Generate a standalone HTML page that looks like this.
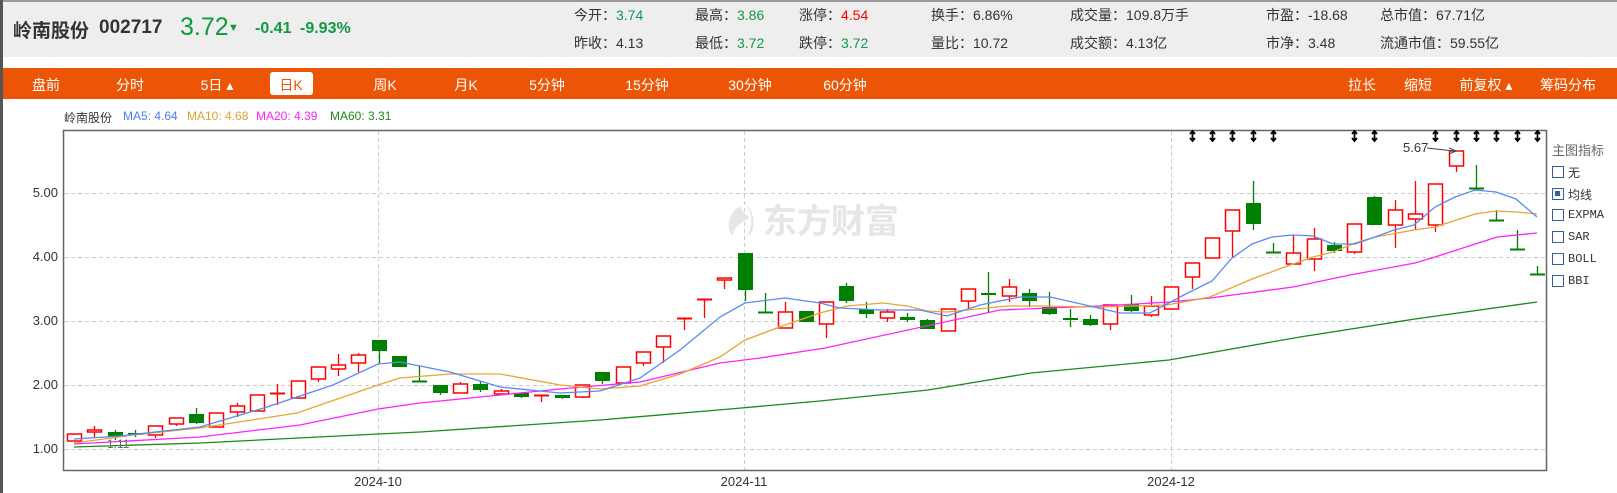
<!DOCTYPE html>
<html><head><meta charset="utf-8">
<style>
*{margin:0;padding:0;box-sizing:border-box}
body{width:1617px;height:493px;background:#fff;position:relative;overflow:hidden;font-family:"Liberation Sans","Noto Sans CJK SC",sans-serif;}
.hdr{position:absolute;left:0;top:0;width:1617px;height:57px;background:#eeeeee;border-top:2px solid #999;}
.lb{position:absolute;left:0;top:0;width:3px;height:493px;background:#555;}
.t{position:absolute;white-space:nowrap;}
.info{font-size:14px;color:#333;}
.g{color:#11994a}.r{color:#ff0000}
.bar{position:absolute;left:3px;top:68px;width:1614px;height:31px;background:#eb5505;}
.bi{position:absolute;top:75px;color:#fff;font-size:14px;transform:translateX(-50%);white-space:nowrap;}
.sel{position:absolute;left:270px;top:72px;width:43px;height:23px;background:#fff;border-radius:3px;}
.leg{font-size:12px;top:109px;}
.yl{position:absolute;font-size:13px;color:#333;width:40px;text-align:right;left:18px;}
.cb{position:absolute;left:1552px;width:12px;height:12px;border:1.5px solid #35609a;background:#fff;}
.cl{position:absolute;left:1568px;font-size:12px;color:#333;font-family:"Liberation Mono","Noto Sans CJK SC",monospace;}
</style></head><body>
<div class="hdr"></div>
<div class="t" style="left:13px;top:16px;font-size:19px;font-weight:bold;color:#333;">岭南股份</div>
<div class="t" style="left:99px;top:17px;font-size:19px;font-weight:bold;color:#333;">002717</div>
<div class="t" style="left:180px;top:13px;font-size:25px;color:#119940;">3.72</div>
<div class="t" style="left:228px;top:22px;font-size:11px;color:#119940;">▼</div>
<div class="t" style="left:255px;top:20px;font-size:16px;font-weight:bold;color:#119940;">-0.41</div>
<div class="t" style="left:300px;top:20px;font-size:16px;font-weight:bold;color:#119940;">-9.93%</div>

<div class="t info" style="left:574px;top:5px;">今开：<span class="g">3.74</span></div>
<div class="t info" style="left:574px;top:33px;">昨收：4.13</div>
<div class="t info" style="left:695px;top:5px;">最高：<span class="g">3.86</span></div>
<div class="t info" style="left:695px;top:33px;">最低：<span class="g">3.72</span></div>
<div class="t info" style="left:799px;top:5px;">涨停：<span class="r">4.54</span></div>
<div class="t info" style="left:799px;top:33px;">跌停：<span class="g">3.72</span></div>
<div class="t info" style="left:931px;top:5px;">换手：6.86%</div>
<div class="t info" style="left:931px;top:33px;">量比：10.72</div>
<div class="t info" style="left:1070px;top:5px;">成交量：109.8万手</div>
<div class="t info" style="left:1070px;top:33px;">成交额：4.13亿</div>
<div class="t info" style="left:1266px;top:5px;">市盈：-18.68</div>
<div class="t info" style="left:1266px;top:33px;">市净：3.48</div>
<div class="t info" style="left:1380px;top:5px;">总市值：67.71亿</div>
<div class="t info" style="left:1380px;top:33px;">流通市值：59.55亿</div>

<div class="bar"></div>
<div class="sel"></div>
<div class="bi" style="left:46px">盘前</div>
<div class="bi" style="left:130px">分时</div>
<div class="bi" style="left:217px">5日 ▴</div>
<div class="bi" style="left:291px;color:#eb5505">日K</div>
<div class="bi" style="left:385px">周K</div>
<div class="bi" style="left:466px">月K</div>
<div class="bi" style="left:547px">5分钟</div>
<div class="bi" style="left:647px">15分钟</div>
<div class="bi" style="left:750px">30分钟</div>
<div class="bi" style="left:845px">60分钟</div>
<div class="bi" style="left:1362px">拉长</div>
<div class="bi" style="left:1418px">缩短</div>
<div class="bi" style="left:1486px">前复权 ▴</div>
<div class="bi" style="left:1568px">筹码分布</div>

<div class="t leg" style="left:64px;color:#333">岭南股份</div>
<div class="t leg" style="left:123px;color:#4a7cf4">MA5: 4.64</div>
<div class="t leg" style="left:187px;color:#e0a030">MA10: 4.68</div>
<div class="t leg" style="left:256px;color:#ff22ff">MA20: 4.39</div>
<div class="t leg" style="left:330px;color:#1a8a1a">MA60: 3.31</div>

<div class="yl" style="top:185px">5.00</div>
<div class="yl" style="top:249px">4.00</div>
<div class="yl" style="top:313px">3.00</div>
<div class="yl" style="top:377px">2.00</div>
<div class="yl" style="top:441px">1.00</div>

<svg id="ch" width="1617" height="493" style="position:absolute;left:0;top:0" xmlns="http://www.w3.org/2000/svg">
<g stroke="#ccc" stroke-dasharray="4,3" stroke-width="1">
<line x1="64" y1="193.5" x2="1546" y2="193.5"/><line x1="64" y1="257.5" x2="1546" y2="257.5"/>
<line x1="64" y1="321.5" x2="1546" y2="321.5"/><line x1="64" y1="385.5" x2="1546" y2="385.5"/>
<line x1="64" y1="449.5" x2="1546" y2="449.5"/>
<line x1="378.5" y1="131" x2="378.5" y2="470"/><line x1="744.5" y1="131" x2="744.5" y2="470"/><line x1="1171.5" y1="131" x2="1171.5" y2="470"/>
</g>
<path d="M63.5 130.5 H1546.5 V470.5 H63.5 Z" fill="none" stroke="#666" stroke-width="1.5"/>
<path d="M740 206 C728 214 726 226 732 236 C734 228 740 222 750 218 C744 214 742 210 740 206 Z M746 204 C752 210 756 220 752 232 L746 238 C754 226 752 214 746 204Z" fill="#e6e6e6"/>
<text x="763" y="233" font-size="34" font-weight="bold" fill="#e6e6e6" font-family="Noto Sans CJK SC,sans-serif">东方财富</text>
<g font-size="13" fill="#333" text-anchor="middle">
<text x="378" y="486">2024-10</text><text x="744" y="486">2024-11</text><text x="1171" y="486">2024-12</text>
</g>
<g id="cand"></g>
<g fill="none" stroke-width="1.3">
<polyline stroke="#1a8a1a" points="74,447 200,443 378,434 420,432 600,420 730,409 820,401 928,390 1031,373 1169,360 1300,337 1415,319 1537,302"/>
<polyline stroke="#ff22ff" points="74,444 200,437 300,425 378,409 420,403 480,397 560,389 640,382 720,363 760,358 825,348 1000,310 1100,306 1170,302 1210,298 1293,287 1350,275 1415,263 1435,257 1497,237 1537,233"/>
<polyline stroke="#e6a535" points="74,443 133,435 200,428 297,413 378,385 400,378 450,374 500,374 560,385 600,389 640,386 680,374 720,357 745,340 785,325 820,313 847,306 883,303 907,306 927,311 947,312 967,310 1007,306 1040,306 1100,307 1167,305 1210,297 1252,279 1293,264 1313,257 1333,252 1355,243 1375,237 1414,230 1435,227 1475,214 1496,211 1516,212 1537,214"/>
<polyline stroke="#5a88f5" points="74,439 120,436 200,427 267,407 333,385 378,364 400,362 420,366 450,372 500,387 560,393 600,391 640,378 680,350 720,317 745,303 785,298 820,303 840,308 880,310 920,310 947,316 980,305 1020,297 1050,297 1090,306 1120,313 1150,313 1180,297 1212,281 1232,258 1252,244 1272,237 1293,235 1313,236 1333,244 1355,244 1375,237 1394,230 1414,225 1435,207 1455,197 1475,190 1496,192 1516,199 1537,217"/>
</g>
<text x="1403" y="152" font-size="13" fill="#333">5.67</text>
<path d="M1427 148 L1454 151" stroke="#444" stroke-width="1"/><path d="M1449 148 L1456 151 L1449 154" fill="none" stroke="#444"/>
<text x="107" y="448" font-size="12" fill="#666">1.11</text>
<g id="mk"></g>
</svg>

<div class="t" style="left:1552px;top:140px;font-size:13px;color:#666">主图指标</div>
<div class="cb" style="top:166px"></div><div class="cl" style="top:164px">无</div>
<div class="cb" style="top:188px"><div style="position:absolute;left:2px;top:2px;width:5px;height:5px;background:#35609a"></div></div><div class="cl" style="top:186px">均线</div>
<div class="cb" style="top:209px"></div><div class="cl" style="top:208px">EXPMA</div>
<div class="cb" style="top:231px"></div><div class="cl" style="top:230px">SAR</div>
<div class="cb" style="top:253px"></div><div class="cl" style="top:252px">BOLL</div>
<div class="cb" style="top:275px"></div><div class="cl" style="top:274px">BBI</div>
<div class="lb"></div>

<script>
var d=[
"r 434 441 434 441","r 430 432 426 437","g 432 437 430 440","g 433 435 430 437","r 426 435 426 438",
"r 418 424 418 426","g 414 423 408 424","r 413 427 413 427","r 406 412 403 417","r 395 411 395 411",
"r 393 393 384 405","r 381 398 381 398","r 367 379 367 382","r 365 369 354 376","r 355 363 353 372",
"g 340 351 340 363","g 356 367 356 367","g 381 382 366 382","g 385 393 385 395","r 384 393 382 393",
"g 384 390 381 392","r 391 394 389 394","g 393 397 393 398","r 395 396 395 402","g 395 398 395 399",
"r 385 397 385 398","g 372 381 372 384","r 367 383 367 383","r 352 363 352 366","r 336 347 336 363",
"r 318 319 318 330","r 299 300 299 318","r 278 280 278 289","g 253 290 253 301","g 312 312 293 312",
"r 312 328 302 328","g 311 322 311 322","r 302 324 302 338","g 286 301 283 303","g 309 314 302 318",
"r 312 318 309 322","g 317 320 313 322","g 320 329 319 329","r 309 331 309 331","r 289 301 289 309",
"g 293 295 272 312","r 287 296 279 302","g 293 301 289 307","g 307 314 292 315","g 318 320 309 327",
"g 319 325 315 326","r 305 324 305 330","g 304 311 295 312","r 306 315 296 317","r 287 309 287 309",
"r 263 277 263 289","r 238 258 238 258","r 210 231 210 258","g 203 224 181 230","g 252 252 243 252",
"r 253 264 235 264","r 239 259 228 271","g 245 251 242 253","r 224 252 224 254","g 197 225 196 225",
"r 210 225 200 248","r 214 219 181 230","r 184 225 184 232","r 151 166 151 172","g 188 188 165 188",
"g 220 220 210 220","g 249 249 230 249","g 274 275 266 275"];
var s="";
d.forEach(function(l,i){var p=l.split(" "),c=p[0]=="r"?"#ff0000":"#008000";
var x=Math.round(74+i*20.32),t=+p[1],b=+p[2],h=+p[3],lo=+p[4];
s+='<line x1="'+(x+0.5)+'" y1="'+h+'" x2="'+(x+0.5)+'" y2="'+lo+'" stroke="'+c+'" stroke-width="1.3"/>';
if(b-t<2){s+='<rect x="'+(x-7)+'" y="'+(t-0.5)+'" width="15" height="2" fill="'+c+'"/>';}
else if(p[0]=="r"){s+='<rect x="'+(x-6.5)+'" y="'+t+'" width="14" height="'+(b-t)+'" fill="#fff" stroke="'+c+'" stroke-width="1.5"/>';}
else{s+='<rect x="'+(x-7)+'" y="'+t+'" width="15" height="'+(b-t)+'" fill="'+c+'"/>';}
});
document.getElementById("cand").innerHTML=s;
var m="";[55,56,57,58,59,63,64,67,68,69,70,71,72].forEach(function(i){var x=Math.round(74+i*20.32)+0.5;
m+='<path d="M'+x+' 131 V141 M'+(x-2.5)+' 134 L'+x+' 131 L'+(x+2.5)+' 134 M'+(x-2.5)+' 138 L'+x+' 141 L'+(x+2.5)+' 138" stroke="#000" stroke-width="1.8" fill="none"/>';});
document.getElementById("mk").innerHTML=m;
</script>
</body></html>
